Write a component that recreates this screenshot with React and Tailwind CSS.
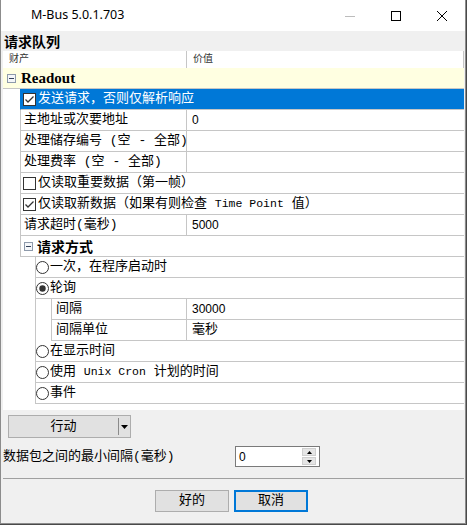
import React from "react";

const CJK = "font-['Liberation_Mono','Noto_Sans_CJK_SC',monospace]";
const LINE = "border-[#c6c6c6]";

function MinusBox() {
    return (
        <svg width="9" height="9" viewBox="0 0 9 9" className="shrink-0">
            <rect x="0.5" y="0.5" width="8" height="8" fill="#f4f6f9" stroke="#8e9aab" />
            <path d="M2 4.5H7" stroke="#33415a" strokeWidth="1" />
        </svg>
    );
}

function Check({ checked }) {
    return (
        <svg width="13" height="13" viewBox="0 0 13 13" className="shrink-0">
            <rect x="0.5" y="0.5" width="12" height="12" fill="#fff" stroke="#333" />
            {checked && <path d="M2.5 6.5L5 9L10.5 3.5" fill="none" stroke="#333" strokeWidth="1.3" />}
        </svg>
    );
}

function Radio({ checked }) {
    return (
        <svg width="13" height="13" viewBox="0 0 13 13" className="shrink-0">
            <circle cx="6.5" cy="6.5" r="6" fill="#fff" stroke="#333" />
            {checked && <circle cx="6.5" cy="6.5" r="3.2" fill="#333" />}
        </svg>
    );
}

function Latin({ children }) {
    return <span className="text-[11.5px]">{children}</span>;
}

// property row with a value cell, the value column always starts at x=186
function PropRow({ label, value, labelW, pad = "pl-[3px]", sans }) {
    return (
        <div className={`flex h-[21px] border-b border-l ${LINE}`}>
            <div className={`${labelW} ${pad} shrink-0 flex items-center border-r ${LINE} whitespace-nowrap`}>{label}</div>
            <div className={`flex-1 pl-[5px] flex items-center ${sans ? "font-['Liberation_Sans',sans-serif] text-[12px]" : ""}`}>{value}</div>
        </div>
    );
}

function CheckRow({ checked, children, selected }) {
    return (
        <div className={`flex h-[21px] items-center gap-[2px] border-b border-l pl-[2px] whitespace-nowrap ${selected ? "bg-[#0078d7] text-white border-l-[#0078d7]" : ""} ${LINE}`}>
            <Check checked={checked} />
            <span>{children}</span>
        </div>
    );
}

function RadioRow({ checked, children }) {
    return (
        <div className={`flex h-[21px] items-center gap-[1px] border-b whitespace-nowrap ${LINE}`}>
            <Radio checked={checked} />
            <span>{children}</span>
        </div>
    );
}

function TitleBar() {
    return (
        <div className="h-[31px] bg-white flex items-center shrink-0">
            <span className="pl-[30px] flex-1 text-[12.5px] text-black font-['Noto_Sans',sans-serif]">M-Bus 5.0.1.703</span>
            <div className="w-[46px] h-full flex items-center justify-center">
                <svg width="10" height="10" viewBox="0 0 10 10"><path d="M0 5.5H10" stroke="#bcbcbc" /></svg>
            </div>
            <div className="w-[46px] h-full flex items-center justify-center">
                <svg width="10" height="10" viewBox="0 0 10 10"><rect x="0.5" y="0.5" width="9" height="9" fill="none" stroke="#000" /></svg>
            </div>
            <div className="w-[46px] h-full flex items-center justify-center">
                <svg width="10" height="10" viewBox="0 0 10 10"><path d="M0 0L10 10M10 0L0 10" stroke="#000" strokeWidth="1" /></svg>
            </div>
        </div>
    );
}

function Grid() {
    return (
        <div className={`ml-[2px] w-[461px] h-[359px] bg-white text-[13px] text-black ${CJK} shrink-0`}>
            <div className={`flex h-[17px] border-r ${LINE} text-[10px] text-[#333]`}>
                <div className={`w-[184px] border-r ${LINE} pl-[6px] flex items-center`}>财产</div>
                <div className="pl-[6px] flex items-center">价值</div>
            </div>

            <div className={`flex h-[21px] items-center gap-[5px] pl-[4px] bg-[#ffffe1] border-b ${LINE}`}>
                <MinusBox />
                <span className="font-bold text-[15px] font-['Liberation_Serif',serif]">Readout</span>
            </div>

            <div className="ml-[17px]">
                <CheckRow checked selected>发送请求，否则仅解析响应</CheckRow>
                <PropRow labelW="w-[166px]" label="主地址或次要地址" value="0" sans />
                <PropRow labelW="w-[166px]" label="处理储存编号 (空 - 全部)" value="" />
                <PropRow labelW="w-[166px]" label="处理费率 (空 - 全部)" value="" />
                <CheckRow>仅读取重要数据（第一帧）</CheckRow>
                <CheckRow checked>仅读取新数据（如果有则检查 <Latin>Time Point</Latin> 值）</CheckRow>
                <PropRow labelW="w-[166px]" label="请求超时(毫秒)" value="5000" sans />

                <div className={`flex h-[21px] items-center gap-[4px] pl-[3px] border-b border-l ${LINE}`}>
                    <MinusBox />
                    <span className="font-bold text-[14px] font-['Noto_Sans_CJK_SC',sans-serif]">请求方式</span>
                </div>

                <div className={`ml-[15px] border-l ${LINE}`}>
                    <RadioRow>一次，在程序启动时</RadioRow>
                    <RadioRow checked>轮询</RadioRow>
                    <div className="ml-[15px]">
                        <PropRow labelW="w-[135px]" pad="pl-[4px]" label="间隔" value="30000" sans />
                        <PropRow labelW="w-[135px]" pad="pl-[4px]" label="间隔单位" value="毫秒" />
                    </div>
                    <RadioRow>在显示时间</RadioRow>
                    <RadioRow>使用 <Latin>Unix Cron</Latin> 计划的时间</RadioRow>
                    <RadioRow>事件</RadioRow>
                </div>
            </div>
        </div>
    );
}

function SpinBox() {
    return (
        <div className="w-[85px] h-[21px] border border-[#7a7a7a] bg-white flex items-center">
            <span className="flex-1 pl-[3px] text-[12px] font-['Liberation_Sans',sans-serif]">0</span>
            <div className="flex flex-col gap-[1px] mr-[3px]">
                <div className="w-[14px] h-[8px] bg-[#e5e5e5] border border-[#cfcfcf] flex items-center justify-center">
                    <svg width="5" height="3" viewBox="0 0 5 3"><path d="M0 3H5L2.5 0Z" fill="#000" /></svg>
                </div>
                <div className="w-[14px] h-[8px] bg-[#e5e5e5] border border-[#cfcfcf] flex items-center justify-center">
                    <svg width="5" height="3" viewBox="0 0 5 3"><path d="M0 0H5L2.5 3Z" fill="#000" /></svg>
                </div>
            </div>
        </div>
    );
}

export default function App() {
    return (
        <div className="w-[467px] h-[525px] bg-[#4a4a4a]">
            <div className={`w-[466px] h-[524px] bg-[#f0f0f0] border-x border-b border-[#8c8c8c] flex flex-col text-black ${CJK}`}>
                <TitleBar />

                <div className="h-[20px] pl-[3px] flex items-center text-[14px] font-bold font-['Noto_Sans_CJK_SC',sans-serif] shrink-0">请求队列</div>

                <Grid />

                <div className="mt-[5px] ml-[7px] w-[123px] h-[23px] bg-[#e1e1e1] border border-[#adadad] flex items-center text-[13px]">
                    <span className="flex-1 text-center">行动</span>
                    <div className="w-[1px] h-[17px] bg-[#fefefe] border-l border-[#8a8a8a]" />
                    <div className="w-[11px] flex justify-center">
                        <svg width="7" height="4" viewBox="0 0 7 4"><path d="M0 0H7L3.5 4Z" fill="#000" /></svg>
                    </div>
                </div>

                <div className="mt-[8px] flex items-center text-[13px]">
                    <span className="w-[234px] pl-[2px] whitespace-nowrap">数据包之间的最小间隔(毫秒)</span>
                    <SpinBox />
                </div>

                <div className="mt-[11px] ml-[2px] w-[461px] h-[1px] bg-[#a0a0a0]" />

                <div className="mt-[11px] pl-[154px] flex gap-[5px] text-[13px]">
                    <div className="w-[74px] h-[22px] bg-[#e1e1e1] border border-[#adadad] flex items-center justify-center">好的</div>
                    <div className="w-[74px] h-[22px] bg-[#e1e1e1] border-2 border-[#0078d7] flex items-center justify-center">取消</div>
                </div>
            </div>
        </div>
    );
}
